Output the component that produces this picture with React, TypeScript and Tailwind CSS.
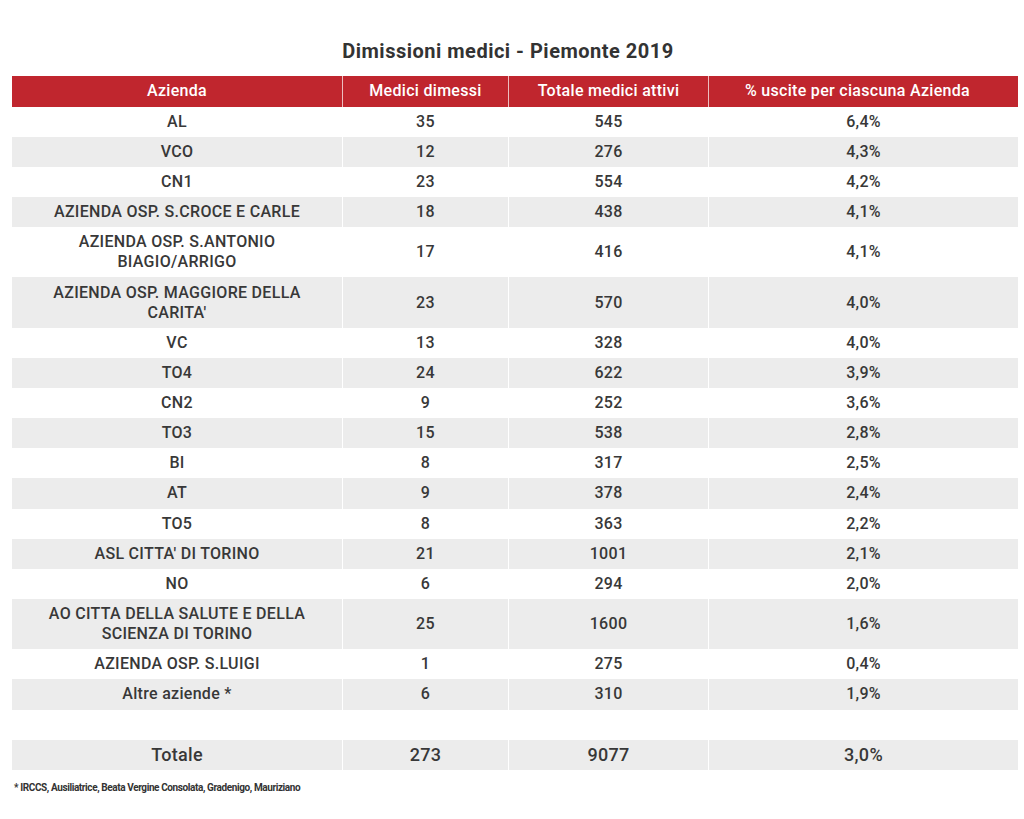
import React from 'react';

type Row = { name: React.ReactNode; dimessi: string; attivi: string; perc: string; tall?: boolean };

const rows: Row[] = [
  { name: 'AL', dimessi: '35', attivi: '545', perc: '6,4%' },
  { name: 'VCO', dimessi: '12', attivi: '276', perc: '4,3%' },
  { name: 'CN1', dimessi: '23', attivi: '554', perc: '4,2%' },
  { name: 'AZIENDA OSP. S.CROCE E CARLE', dimessi: '18', attivi: '438', perc: '4,1%' },
  { name: <>AZIENDA OSP. S.ANTONIO<br />BIAGIO/ARRIGO</>, dimessi: '17', attivi: '416', perc: '4,1%', tall: true },
  { name: <>AZIENDA OSP. MAGGIORE DELLA<br />CARITA'</>, dimessi: '23', attivi: '570', perc: '4,0%', tall: true },
  { name: 'VC', dimessi: '13', attivi: '328', perc: '4,0%' },
  { name: 'TO4', dimessi: '24', attivi: '622', perc: '3,9%' },
  { name: 'CN2', dimessi: '9', attivi: '252', perc: '3,6%' },
  { name: 'TO3', dimessi: '15', attivi: '538', perc: '2,8%' },
  { name: 'BI', dimessi: '8', attivi: '317', perc: '2,5%' },
  { name: 'AT', dimessi: '9', attivi: '378', perc: '2,4%' },
  { name: 'TO5', dimessi: '8', attivi: '363', perc: '2,2%' },
  { name: "ASL CITTA' DI TORINO", dimessi: '21', attivi: '1001', perc: '2,1%' },
  { name: 'NO', dimessi: '6', attivi: '294', perc: '2,0%' },
  { name: <>AO CITTA DELLA SALUTE E DELLA<br />SCIENZA DI TORINO</>, dimessi: '25', attivi: '1600', perc: '1,6%', tall: true },
  { name: 'AZIENDA OSP. S.LUIGI', dimessi: '1', attivi: '275', perc: '0,4%' },
  { name: 'Altre aziende *', dimessi: '6', attivi: '310', perc: '1,9%' },
];

const cols = 'grid grid-cols-[330px_166px_200px_310px]';

const App = () => {
  return (
    <div className="min-h-[819px] bg-white pt-[38px] font-['Roboto',sans-serif] text-[#383838]">
      <div className="ml-[12px] w-[1006px]">
        <h1 className="pr-[14px] text-center text-[20px] leading-[26px] font-bold tracking-[0.5px] text-[#333]">
          Dimissioni medici - Piemonte 2019
        </h1>

        {/* Header */}
        <div className={`${cols} mt-[12px] h-[30.5px] bg-[#c0262e] text-[16px] font-medium tracking-[0.3px] text-white`}>
          <div className="flex items-center justify-center">Azienda</div>
          <div className="flex items-center justify-center border-l border-white/70">Medici dimessi</div>
          <div className="flex items-center justify-center border-l border-white/70">Totale medici attivi</div>
          <div className="flex items-center justify-center border-l border-white/70 pr-[12px]">% uscite per ciascuna Azienda</div>
        </div>

        {/* Body */}
        {rows.map((r, i) => (
          <div
            key={i}
            className={`${cols} ${r.tall ? 'h-[50.3px]' : 'h-[30.15px]'} ${i % 2 === 1 ? 'bg-[#ececec]' : 'bg-white'} text-[16px] leading-[20px] font-medium tracking-[0.3px]`}
          >
            <div className="flex items-center justify-center text-center">{r.name}</div>
            <div className="flex items-center justify-center border-l border-white">{r.dimessi}</div>
            <div className="flex items-center justify-center border-l border-white">{r.attivi}</div>
            <div className="flex items-center justify-center border-l border-white">{r.perc}</div>
          </div>
        ))}

        <div className="h-[30px]" />

        {/* Totale */}
        <div className={`${cols} h-[30px] bg-[#ececec] text-[18px] font-medium tracking-[0.3px]`}>
          <div className="flex items-center justify-center">Totale</div>
          <div className="flex items-center justify-center border-l border-white">273</div>
          <div className="flex items-center justify-center border-l border-white">9077</div>
          <div className="flex items-center justify-center border-l border-white">3,0%</div>
        </div>

        <p className="mt-[12px] ml-[2px] text-[10px] leading-[12px] font-bold tracking-[-0.4px] text-[#333]">
          * IRCCS, Ausiliatrice, Beata Vergine Consolata, Gradenigo, Mauriziano
        </p>
      </div>
    </div>
  );
};

export default App;
